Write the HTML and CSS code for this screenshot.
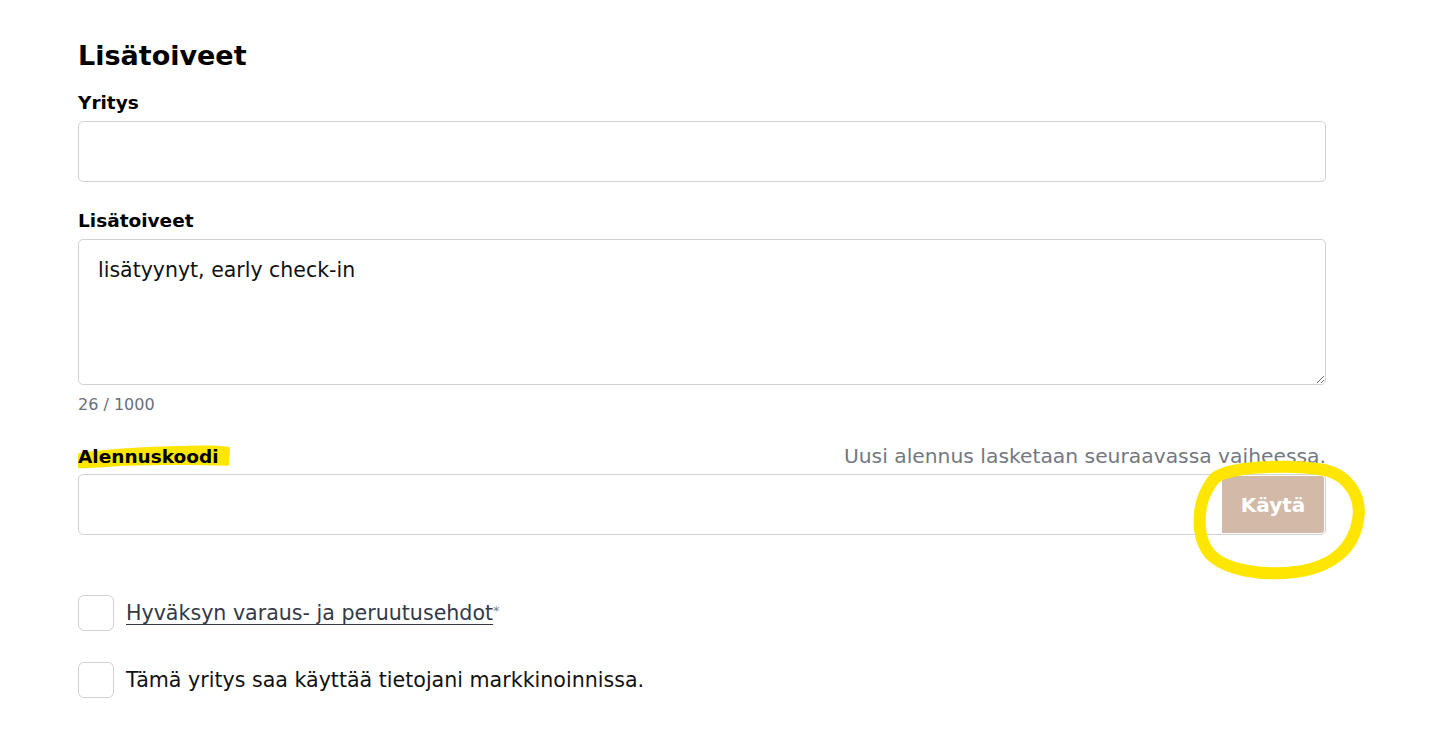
FILE: index.html
```html
<!DOCTYPE html>
<html lang="fi">
<head>
<meta charset="utf-8">
<title>Lisätoiveet</title>
<link rel="stylesheet" href="styles.css">
</head>
<body>
<main class="form">
  <h2 class="title">Lisätoiveet</h2>

  <div class="field field-company">
    <label class="label" for="company">Yritys</label>
    <input class="input" id="company" type="text">
  </div>

  <div class="field field-notes">
    <label class="label" for="notes">Lisätoiveet</label>
    <textarea class="textarea" id="notes">lisätyynyt, early check-in</textarea>
    <div class="counter">26 / 1000</div>
  </div>

  <div class="field field-code">
    <div class="code-head">
      <label class="label label-marked" for="code">
        <svg class="marker" viewBox="0 0 156 26" preserveAspectRatio="none" aria-hidden="true">
          <path d="M2 10 C 30 6, 60 4, 100 3 C 125 2, 145 2, 154 4 L 153 22 C 120 21, 80 21, 50 22 C 30 23, 12 25, 2 24 Z" fill="#ffe600"/>
        </svg>
        <span class="label-text">Alennuskoodi</span>
      </label>
      <span class="hint">Uusi alennus lasketaan seuraavassa vaiheessa.</span>
    </div>
    <div class="code-row">
      <input class="input code-input" id="code" type="text">
      <button class="apply" type="button">Käytä</button>
      <svg class="circle" viewBox="0 0 180 130" aria-hidden="true">
        <path d="M25 20 C 40 8, 100 6, 135 12 C 160 18, 172 40, 168 62 C 164 88, 145 109, 105 114 C 70 118, 35 112, 20 96 C 8 82, 8 60, 12 44 C 15 34, 18 28, 25 20" fill="none" stroke="#ffe600" stroke-width="12" stroke-linecap="round"/>
      </svg>
    </div>
  </div>

  <div class="checks">
    <label class="check">
      <span class="box"></span>
      <span class="check-text"><span class="link">Hyväksyn varaus- ja peruutusehdot</span><sup class="req">*</sup></span>
    </label>
    <label class="check">
      <span class="box"></span>
      <span class="check-text">Tämä yritys saa käyttää tietojani markkinoinnissa.</span>
    </label>
  </div>
</main>
</body>
</html>
```

FILE: styles.css
```css
* { box-sizing: border-box; }
html, body { margin: 0; padding: 0; background: #ffffff; }
body {
  font-family: "DejaVu Sans", "Noto Sans", sans-serif;
  color: #111111;
}
.form {
  width: 1248px;
  margin-left: 78px;
  padding-top: 38px;
  display: flex;
  flex-direction: column;
}
.title {
  margin: 0;
  font-size: 27px;
  line-height: 36px;
  font-weight: 700;
  color: #000;
}
.field { display: flex; flex-direction: column; }
.label {
  font-size: 18.5px;
  line-height: 24px;
  font-weight: 600;
  color: #000;
  margin-bottom: 6px;
}
.field-company { margin-top: 17px; }
.input {
  height: 61px;
  border: 1px solid #d1d1d6;
  border-radius: 5px;
  font: inherit;
  font-size: 20px;
  padding: 0 19px;
  background: #fff;
  outline: none;
}
.field-notes { margin-top: 27px; }
.textarea {
  height: 146px;
  border: 1px solid #d1d1d6;
  border-radius: 5px;
  font-family: inherit;
  font-size: 20.5px;
  line-height: 28px;
  color: #111;
  padding: 16px 19px;
  resize: vertical;
  outline: none;
}
.counter {
  margin-top: 10px;
  font-size: 16px;
  line-height: 20px;
  color: #6b6f76;
}
.field-code { margin-top: 29px; }
.code-head {
  display: flex;
  justify-content: space-between;
  align-items: baseline;
  margin-bottom: 5px;
}
.code-head .label { margin-bottom: 0; }
.label-marked { position: relative; display: inline-block; }
.label-text { position: relative; }
.marker {
  position: absolute;
  left: -2px;
  top: -2px;
  width: 156px;
  height: 27px;
}
.hint {
  font-size: 20.3px;
  line-height: 24px;
  color: #737880;
}
.code-row { position: relative; display: flex; }
.code-input { flex: 1; }
.apply {
  position: absolute;
  right: 2px;
  top: 2px;
  width: 102px;
  height: 57px;
  border: none;
  border-radius: 0 3px 3px 0;
  background: #d3b9a8;
  color: #fff;
  font-family: inherit;
  font-size: 20px;
  font-weight: 700;
}
.circle {
  position: absolute;
  left: 1112px;
  top: -16px;
  width: 180px;
  height: 130px;
  pointer-events: none;
}
.checks {
  margin-top: 60px;
  display: flex;
  flex-direction: column;
  gap: 31px;
}
.check { display: flex; align-items: center; gap: 12px; }
.box {
  width: 36px;
  height: 36px;
  border: 1px solid #d1d1d6;
  border-radius: 6px;
  background: #fff;
  flex: none;
}
.check-text {
  font-size: 20.6px;
  line-height: 28px;
  color: #111;
}
.link {
  color: #333a46;
  text-decoration: underline;
  text-underline-offset: 4px;
  text-decoration-thickness: 1px;
}
.req {
  font-size: 13px;
  color: #7a7f87;
  vertical-align: top;
  position: relative;
  top: -2px;
}
```
